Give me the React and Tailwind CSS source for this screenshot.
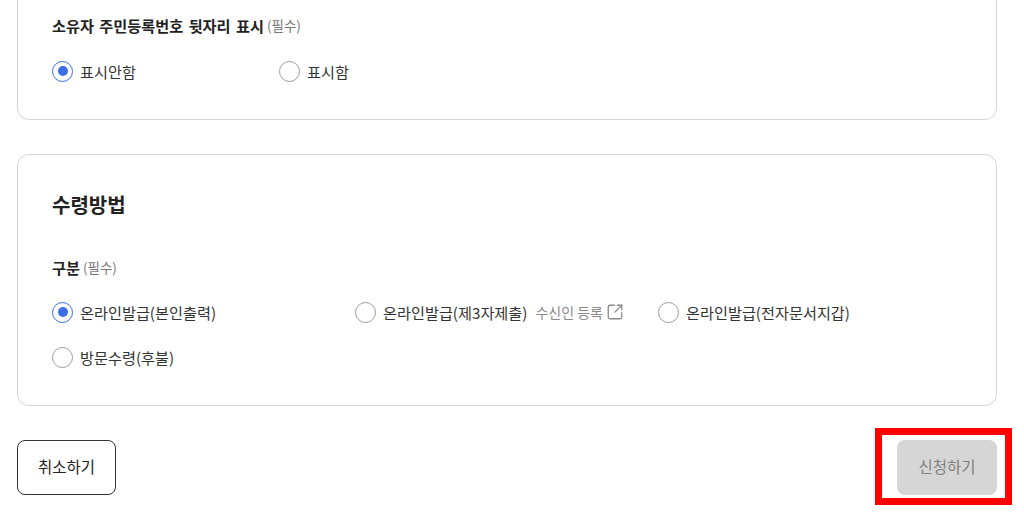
import { SquareArrowOutUpRight } from "lucide-react";

const FONT = "font-['Noto_Sans_CJK_KR','Noto_Sans',sans-serif]";

function Radio({ label, checked, className = "", children }) {
  return (
    <div className={`flex h-[24px] items-center ${className}`}>
      {checked ? (
        <span className="flex h-[21px] w-[21px] shrink-0 items-center justify-center rounded-full border-[1.5px] border-[#3b6fe8] bg-white">
          <span className="h-[10px] w-[10px] rounded-full bg-[#3b6fe8]" />
        </span>
      ) : (
        <span className="h-[21px] w-[21px] shrink-0 rounded-full border-[1.5px] border-[#9c9c9c] bg-white" />
      )}
      <span className="ml-[7px] text-[15.2px] leading-[24px] text-[#333333]">{label}</span>
      {children}
    </div>
  );
}

function FieldLabel({ children }) {
  return (
    <div className="flex h-[24px] items-center">
      <span className="text-[15.2px] leading-[24px] font-semibold text-[#222222] [word-spacing:2px]">{children}</span>
      <span className="ml-[3px] text-[13.5px] leading-[24px] text-[#777777]">(필수)</span>
    </div>
  );
}

export default function App() {
  return (
    <div className={`relative h-[515px] w-[1024px] overflow-hidden bg-white px-[17px] ${FONT}`}>
      {/* 위쪽 카드 (상단 잘림) */}
      <section className="-mt-[20px] h-[140px] w-[980px] rounded-[12px] border border-[#d4d4d4] px-[34px] pt-[32px]">
        <FieldLabel>소유자 주민등록번호 뒷자리 표시</FieldLabel>
        <div className="mt-[22px] flex">
          <Radio label="표시안함" checked className="w-[227px]" />
          <Radio label="표시함" />
        </div>
      </section>

      {/* 수령방법 */}
      <section className="mt-[34px] h-[252px] w-[980px] rounded-[12px] border border-[#d4d4d4] px-[34px] pt-[33px]">
        <h2 className="h-[34px] text-[20px] leading-[34px] font-semibold text-[#222222]">수령방법</h2>
        <div className="mt-[33px]">
          <FieldLabel>구분</FieldLabel>
        </div>
        <div className="mt-[21px] flex">
          <Radio label="온라인발급(본인출력)" checked className="w-[303px]" />
          <Radio label="온라인발급(제3자제출)" className="w-[303px]">
            <span className="ml-[8px] text-[14px] leading-[24px] text-[#8a8a8a]">수신인 등록</span>
            <SquareArrowOutUpRight className="ml-[3px] h-[18px] w-[18px] text-[#8a8a8a]" strokeWidth={1.75} />
          </Radio>
          <Radio label="온라인발급(전자문서지갑)" />
        </div>
        <div className="mt-[21px]">
          <Radio label="방문수령(후불)" />
        </div>
      </section>

      <div className="mt-[34px] flex w-[980px] justify-between">
        <button className="h-[55px] w-[99px] rounded-[8px] border border-[#333333] bg-white pb-[1px] text-[15.5px] text-[#222222]">
          취소하기
        </button>
        <button className="h-[55px] w-[100px] rounded-[8px] bg-[#d6d6d6] pb-[1px] text-[15.5px] text-[#808080]">
          신청하기
        </button>
      </div>

      {/* 빨간 강조 표시 */}
      <div className="absolute top-[428px] left-[875px] h-[77px] w-[137px] border-[7px] border-[#ff0000]" />
    </div>
  );
}
